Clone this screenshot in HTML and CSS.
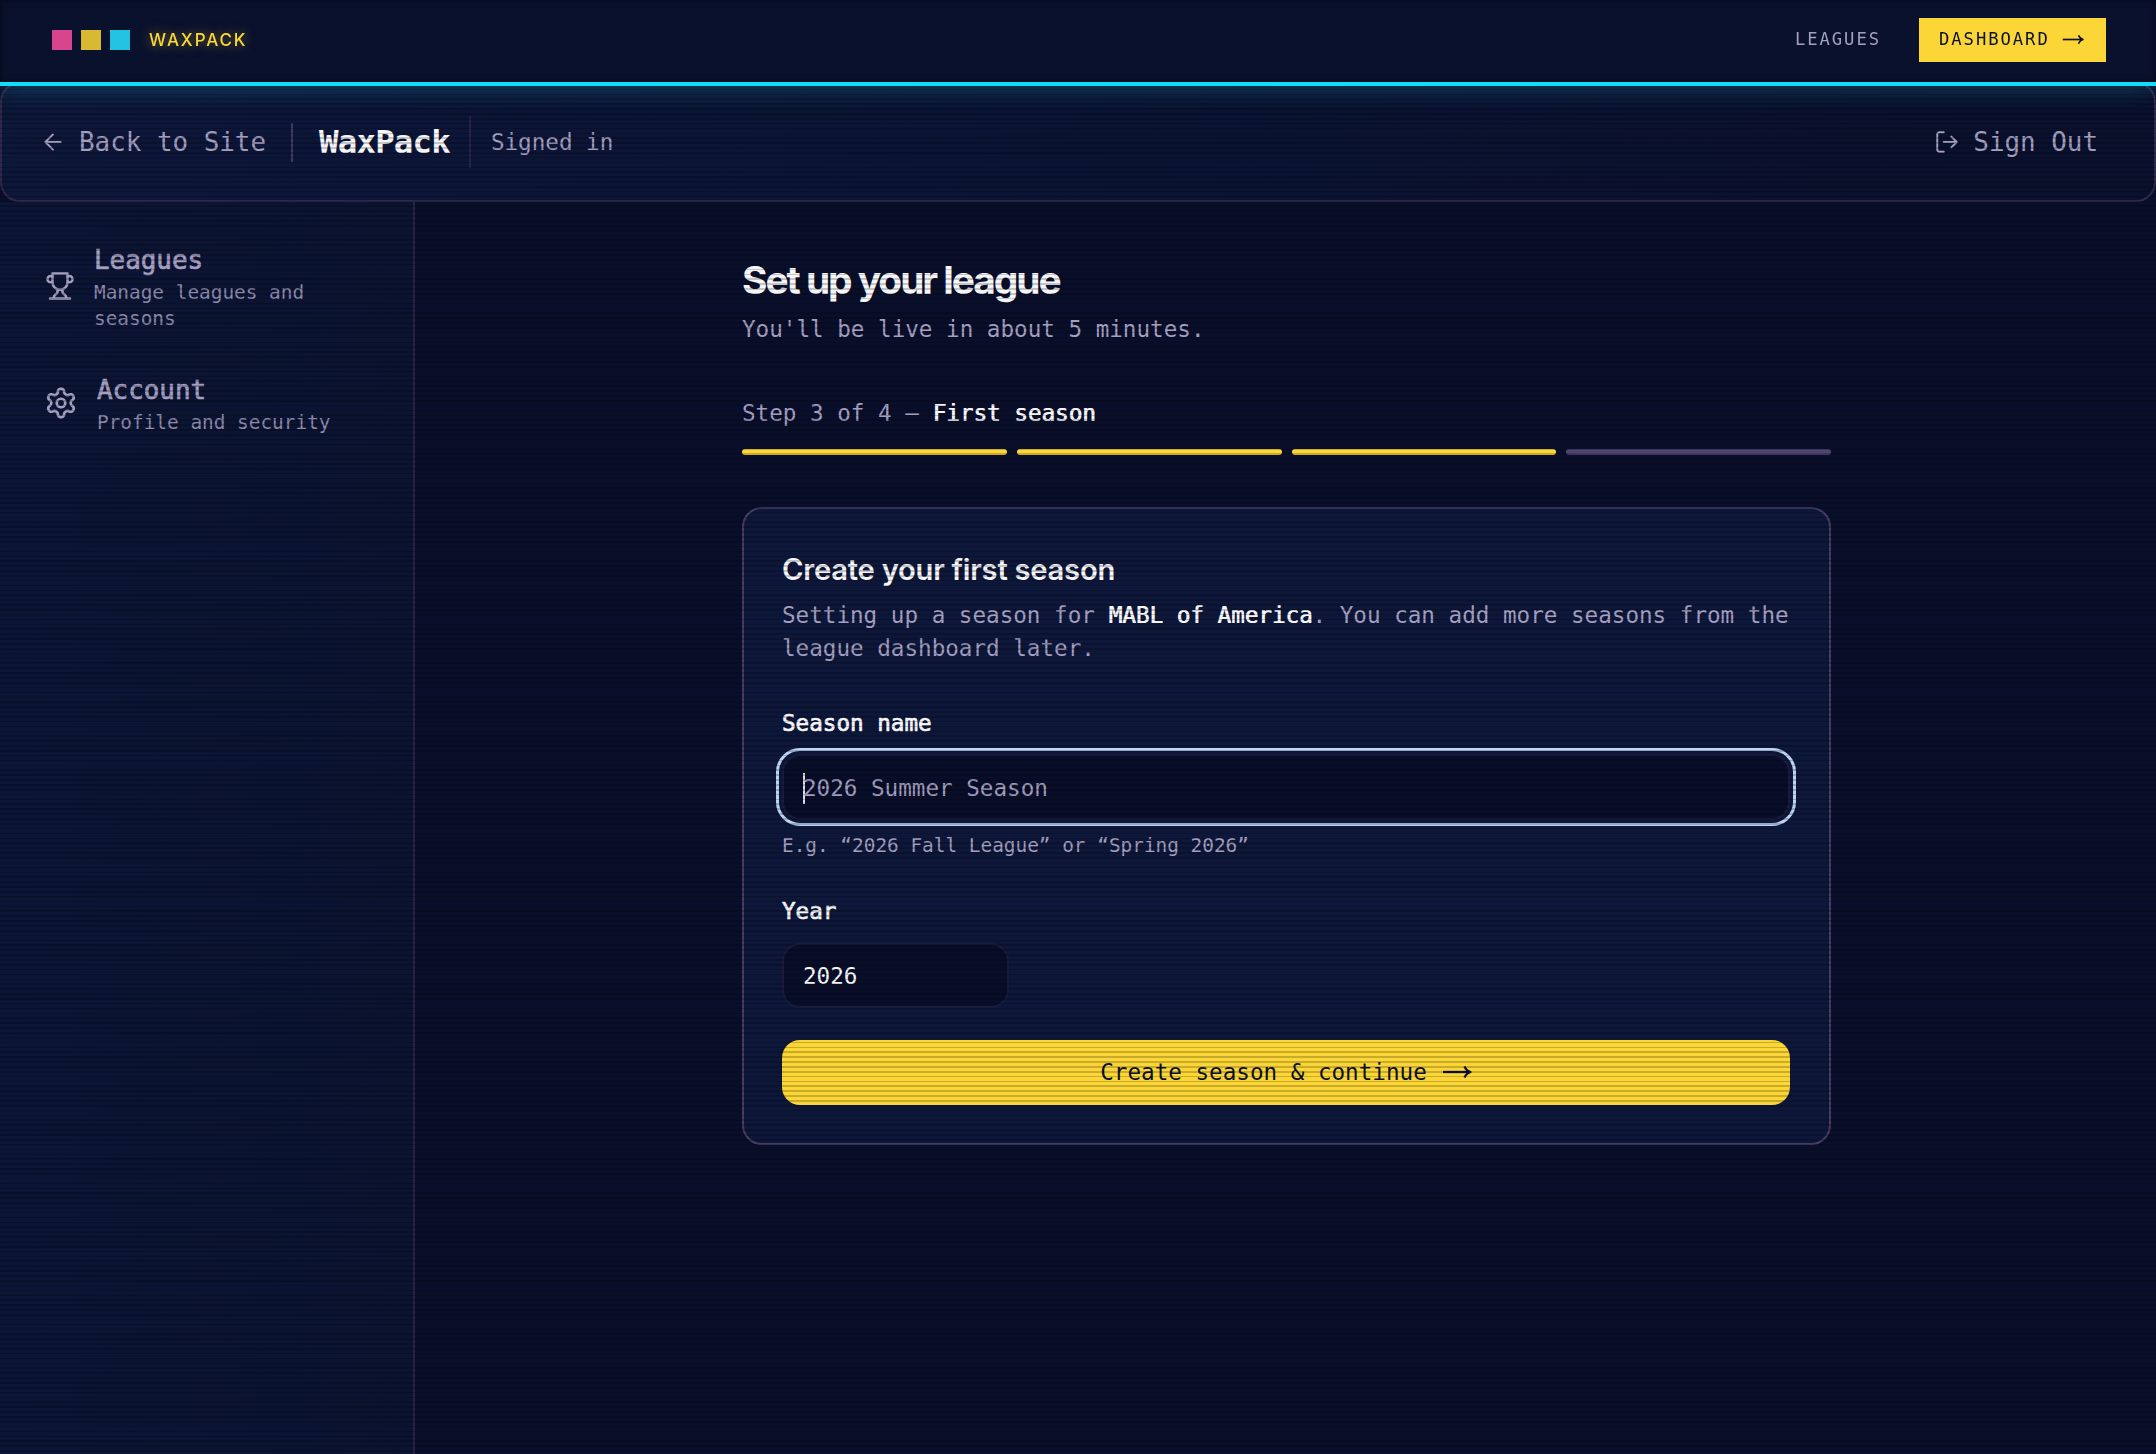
FILE: index.html
```html
<!DOCTYPE html>
<html lang="en">
<head>
<meta charset="utf-8">
<title>WaxPack</title>
<link rel="stylesheet" href="styles.css">
</head>
<body>
<nav class="topnav">
  <a class="brand"><span class="sq pink"></span><span class="sq gold"></span><span class="sq cyan"></span><span class="brand-name">WAXPACK</span></a>
  <div class="topnav-links"><a class="toplink">LEAGUES</a><a class="dash">DASHBOARD<svg class="arrow" viewBox="0 0 30 14"><path d="M1 7H28"/><path d="M22.5 1.5Q24.5 6 28.5 7Q24.5 8 22.5 12.5"/></svg></a></div>
</nav>
<header class="header">
  <a class="back"><svg class="ic-back" viewBox="0 0 24 24"><path d="M19 12H5M12 19l-7-7 7-7"/></svg>Back to Site</a>
  <span class="rule"></span>
  <strong class="logo">WaxPack</strong>
  <span class="signed">Signed in</span>
  <a class="signout"><svg class="ic-out" viewBox="0 0 24 24"><path d="M9 21H5a2 2 0 0 1-2-2V5a2 2 0 0 1 2-2h4M16 17l5-5-5-5M21 12H9"/></svg>Sign Out</a>
</header>
<div class="body">
  <aside class="sidebar">
    <a class="item"><svg class="ic-cup" viewBox="0 0 24 24"><path d="M6 9H4.5a2.5 2.5 0 0 1 0-5H6M18 9h1.5a2.5 2.5 0 0 0 0-5H18M4 22h16M10 14.66V17c0 .55-.47.98-.97 1.21C7.85 18.75 7 20.24 7 22M14 14.66V17c0 .55.47.98.97 1.21C16.15 18.75 17 20.24 17 22M18 2H6v7a6 6 0 0 0 12 0V2Z"/></svg><div><div class="item-title">Leagues</div><div class="item-desc">Manage leagues and seasons</div></div></a>
    <a class="item"><svg class="ic-gear" viewBox="0 0 24 24"><path d="M12.22 2h-.44a2 2 0 0 0-2 2v.18a2 2 0 0 1-1 1.73l-.43.25a2 2 0 0 1-2 0l-.15-.08a2 2 0 0 0-2.73.73l-.22.38a2 2 0 0 0 .73 2.73l.15.1a2 2 0 0 1 1 1.72v.51a2 2 0 0 1-1 1.74l-.15.09a2 2 0 0 0-.73 2.73l.22.38a2 2 0 0 0 2.73.73l.15-.08a2 2 0 0 1 2 0l.43.25a2 2 0 0 1 1 1.73V20a2 2 0 0 0 2 2h.44a2 2 0 0 0 2-2v-.18a2 2 0 0 1 1-1.73l.43-.25a2 2 0 0 1 2 0l.15.08a2 2 0 0 0 2.73-.73l.22-.39a2 2 0 0 0-.73-2.73l-.15-.08a2 2 0 0 1-1-1.74v-.5a2 2 0 0 1 1-1.74l.15-.09a2 2 0 0 0 .73-2.73l-.22-.38a2 2 0 0 0-2.73-.73l-.15.08a2 2 0 0 1-2 0l-.43-.25a2 2 0 0 1-1-1.73V4a2 2 0 0 0-2-2z"/><circle cx="12" cy="12" r="3"/></svg><div><div class="item-title">Account</div><div class="item-desc">Profile and security</div></div></a>
  </aside>
  <main class="main">
    <div class="wizard">
      <h1>Set up your league</h1>
      <p class="sub">You'll be live in about 5 minutes.</p>
      <p class="step">Step 3 of 4 — <b>First season</b></p>
      <div class="bars"><i class="on"></i><i class="on"></i><i class="on"></i><i></i></div>
      <section class="card">
        <h2>Create your first season</h2>
        <p class="lead">Setting up a season for <b>MABL of America</b>. You can add more seasons from the league dashboard later.</p>
        <div class="label">Season name</div>
        <div class="field focus"><span class="caret"></span>2026 Summer Season</div>
        <p class="hint">E.g. “2026 Fall League” or “Spring 2026”</p>
        <div class="label label-year">Year</div>
        <div class="field year">2026</div>
        <div class="submit">Create season &amp; continue<svg class="arrow" viewBox="0 0 30 14"><path d="M1 7H28"/><path d="M22.5 1.5Q24.5 6 28.5 7Q24.5 8 22.5 12.5"/></svg></div>
      </section>
    </div>
  </main>
</div>
<div class="scanlines"></div>
</body>
</html>
```
FILE: styles.css
```css
* { box-sizing: border-box; }
html, body { margin: 0; height: 100%; overflow: hidden; }
body {
  display: flex; flex-direction: column;
  background: #090f2a; color: #f6f5f8;
  font-family: "DejaVu Sans Mono", "Liberation Mono", monospace;
  font-size: 22.6px; line-height: 32.4px;
}
h1, h2, p { margin: 0; }
svg { fill: none; stroke: currentColor; stroke-width: 2; stroke-linecap: round; stroke-linejoin: round; flex: none; display: block; }
.arrow { width: 30px; height: 14px; margin-left: 15px; stroke-linecap: butt; stroke-width: 2.3; }

.topnav {
  position: relative; z-index: 20; flex: none; height: 86px;
  display: flex; align-items: center; justify-content: space-between;
  padding: 1px 50px 4px 52px; background: #0a112d;
  border-bottom: 4px solid #12dcf6;
  box-shadow: 0 0 26px rgba(34, 211, 238, .28), inset 0 0 6px rgba(0, 4, 16, .6);
}
.brand { display: flex; align-items: center; gap: 9px; }
.sq { width: 20px; height: 20px; }
.pink { background: #d9448f; }
.gold { background: #d9b931; }
.cyan { background: #22c3e0; }
.brand-name { margin-left: 10px; font: 500 17px/20px Inter, sans-serif; letter-spacing: 1.9px; color: #fcd835; text-shadow: 0 0 12px rgba(252, 216, 53, .5); }
.topnav-links { display: flex; align-items: center; gap: 38px; font-size: 17.2px; letter-spacing: 1.95px; color: #a49fc0; }
.dash { display: flex; align-items: center; width: 187px; height: 44px; padding-left: 20px; background: #fcd636; color: #0a112d; }
.dash .arrow { width: 22px; height: 11px; margin-left: 12px; }

.header {
  position: relative; flex: none; height: 120px; margin-top: -4px;
  display: flex; align-items: center; padding: 0 56px 0 41px;
  background: linear-gradient(100deg, #0d173a, #0a112e 90%);
  border: 2px solid #30284c; border-radius: 20px; color: #a49fc0;
}
.back, .signout { display: flex; align-items: center; font-size: 25.9px; }
.back { gap: 13px; }
.ic-back { width: 26px; height: 26px; margin-left: -3px; stroke-width: 1.8; }
.rule { width: 2px; height: 39px; background: #43385f; margin: 0 26px 0 25px; }
.logo { font-size: 32.4px; letter-spacing: -.81px; color: #f6f5f8; }
.signed { height: 52px; line-height: 52px; margin-left: 19px; padding-left: 20px; border-left: 2px solid #292447; }
.signout { margin-left: auto; gap: 13px; }
.ic-out { width: 26px; height: 26px; stroke-width: 1.8; }

.body { flex: 1; display: flex; min-height: 0; }
.sidebar { width: 415px; flex: none; padding: 38px 26px 0 44px; background: linear-gradient(90deg, #0c1535, #0b1331); border-right: 2px solid #292447; color: #a49fc0; }
.item { display: flex; align-items: center; gap: 19px; min-height: 92px; margin-bottom: 25px; }
.item-title { font-size: 25.9px; line-height: 39px; -webkit-text-stroke: .7px; }
.item-desc { font-size: 19.4px; line-height: 26px; color: #8d89ad; }
.ic-cup { width: 30px; height: 30px; margin-left: 1px; stroke-width: 2; }
.ic-gear { width: 34px; height: 34px; stroke-width: 1.9; }

.main { flex: 1; display: flex; justify-content: center; padding: 57px 0 0 2px; }
.wizard { width: 1089px; display: flex; flex-direction: column; }
h1 { font: 700 38.9px/42px Inter, sans-serif; letter-spacing: -2.05px; }
.sub, .step { color: #a49fc0; }
.sub { margin-top: 12px; }
.step { margin-top: 52px; }
b { color: #f6f5f8; font-weight: 400; text-shadow: .7px 0 currentColor; }
.bars { display: grid; grid-template-columns: repeat(4, 1fr); gap: 10px; margin-top: 19px; }
.bars i { height: 6px; border-radius: 3px; background: #4f4570; }
.bars .on { background: #fcd636; }
.card { margin-top: 52px; height: 638px; padding: 43px 39px 0 38px; background: #0d1739; border: 2px solid #483c64; border-radius: 20px; }
h2 { font: 600 29.2px/36px Inter, sans-serif; letter-spacing: -.25px; }
.lead { color: #a49fc0; margin-top: 11px; line-height: 33px; }
.label { margin-top: 42px; -webkit-text-stroke: .7px; }
.label-year { margin-top: 36px; }
.field { height: 65px; margin-top: 15px; padding: 0 19px; border: 2px solid #1a1c3c; border-radius: 18px; background: #080e29; line-height: 63px; }
.focus { display: flex; align-items: center; height: 66px; padding-top: 2px; color: #a49fc0; outline: 3px solid #bcd3f2; outline-offset: 3px; }
.caret { width: 2px; height: 31px; margin-right: -2px; background: #dcdbe6; }
.hint { font-size: 19.4px; line-height: 26px; margin-top: 13px; color: #a49fc0; }
.year { width: 227px; }
.submit { display: flex; align-items: center; justify-content: center; height: 65px; margin-top: 32px; border-radius: 18px; background: #fcd636; color: #0a112d; }

.scanlines { position: fixed; inset: -2.5px 0 0 0; z-index: 10; pointer-events: none; background: repeating-linear-gradient(180deg, transparent 0 3.24px, rgba(0, 0, 0, .2) 3.24px 4.862px); }
```
